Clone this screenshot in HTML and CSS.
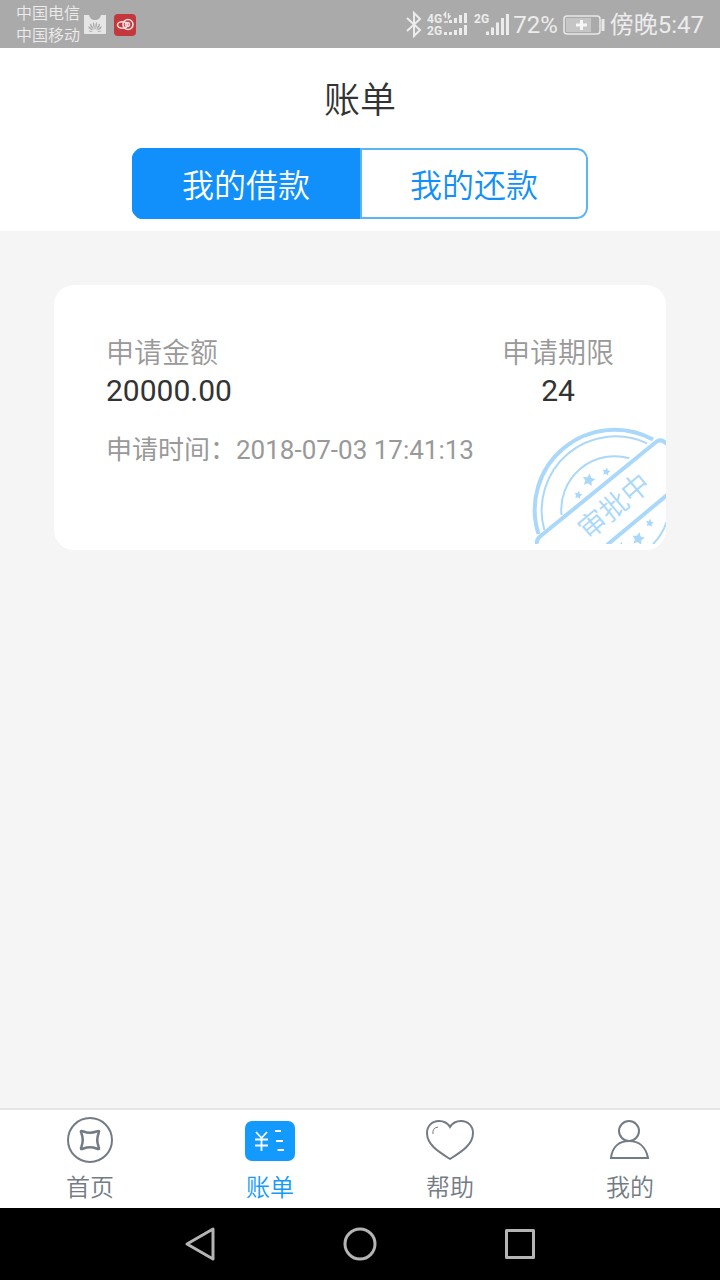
FILE: index.html
```html
<!DOCTYPE html>
<html lang="zh-CN">
<head>
<meta charset="utf-8">
<meta name="viewport" content="width=device-width, initial-scale=1">
<title>账单</title>
<link rel="stylesheet" href="styles.css">
</head>
<body>
<div class="status-bar">
  <div class="status-left">
    <div class="carriers"><span>中国电信</span><span>中国移动</span></div>
    <svg width="22" height="22" viewBox="0 0 22 22" aria-hidden="true">
      <path d="M0 1H5Q6 6 11 6T17 1H22V19Q22 20 21 20H1Q0 20 0 19Z" fill="#e6e6e6"/>
      <g fill="#aaa"><path d="M10.600 16Q8 10 9.500 8Q11 10 10.600 16Z"/><path d="M11.400 16Q11 10 12.500 8Q14 10 11.400 16Z"/><path d="M9.800 16Q5 12 6.200 9.500Q8.500 11 9.800 16Z"/><path d="M12.200 16Q17 12 15.800 9.500Q13.500 11 12.200 16Z"/><path d="M9.200 16.500Q4 15 4.300 12Q7 13 9.200 16.500Z"/><path d="M12.800 16.500Q18 15 17.700 12Q15 13 12.800 16.500Z"/><path d="M9 17.200Q5.500 18.500 4.500 16.500Z"/><path d="M13 17.200Q16.500 18.500 17.500 16.500Z"/></g>
    </svg>
    <svg width="22" height="22" viewBox="0 0 22 22" aria-hidden="true">
      <rect width="22" height="22" rx="4" fill="#c4373d"/>
      <g fill="none" stroke="#f6dede" stroke-width="1.600"><circle cx="14" cy="10.500" r="5"/><ellipse cx="8.500" cy="11" rx="5" ry="3.200"/><circle cx="13.500" cy="10.500" r="2"/></g>
    </svg>
  </div>
  <div class="status-right">
    <svg width="106" height="30" viewBox="0 0 106 30" aria-hidden="true">
      <path d="M2 8L15 20L9 26V3L15 9L2 21" fill="none" stroke="#ececec" stroke-width="2"/>
      <g class="network"><text x="22" y="13">4G</text><text x="22" y="25">2G</text><text x="69" y="13">2G</text></g>
      <g stroke="#ececec" stroke-width="3">
        <path d="M45.500 13V10M50.500 13V8M55.500 13V5M60.500 13V3M45.500 25V22M50.500 25V20M55.500 25V18M60.500 25V15M40.500 25V22"/>
        <path d="M82.500 25V21.500M87.500 25V17.500M92.500 25V12.500M97.500 25V8M102.500 25V4"/>
      </g>
      <path d="M40.500 8V3L38.500 5.500M43.500 3V8L45.500 5.500M39 12H43" fill="none" stroke="#ececec" stroke-width="1.500"/>
    </svg>
    <span>72%</span>
    <svg class="battery" width="42" height="20" viewBox="0 0 42 20" aria-hidden="true">
      <rect x="1" y="1" width="36" height="18" rx="3" fill="none" stroke="#e8e8e8" stroke-width="1.500"/>
      <rect x="3" y="3" width="25" height="14" fill="#c5c5c5"/>
      <path d="M18.500 5V15M13 10H24" stroke="#f6f6f6" stroke-width="3"/><path d="M40 4V16" stroke="#e8e8e8" stroke-width="3"/>
    </svg>
    <span>傍晚5:47</span>
  </div>
</div>

<header class="header">
  <h1 class="title">账单</h1>
  <div class="segments">
    <button class="segment segment-active" type="button" aria-pressed="true">我的借款</button>
    <button class="segment" type="button" aria-pressed="false">我的还款</button>
  </div>
</header>

<main class="content">
  <article class="loan-card">
    <div class="loan-summary">
      <div><div class="label">申请金额</div><div class="value">20000.00</div></div>
      <div class="term"><div class="label">申请期限</div><div class="value">24</div></div>
    </div>
    <p class="applied">申请时间：2018-07-03 17:41:13</p>
    <svg class="stamp" width="136" height="126" viewBox="0 0 136 126" role="img" aria-label="审批中">
      <defs><path id="star" d="M0-6L1.800-2.300L5.800-1.800L2.900 1L3.600 5L0 3.100L-3.600 5L-2.900 1L-5.800-1.800L-1.800-2.300Z"/></defs>
      <svg width="136" height="120">
        <g fill="none" stroke="#a9d8fb">
          <path d="M8.500 110A80 80 0 0 1 123 15.500" stroke-width="4"/>
          <path d="M14.300 106A74 74 0 0 1 117 19.300" stroke-width="2"/>
          <path d="M31.500 91A53.500 53.500 0 0 1 99.300 34.200M136.500 98A53 53 0 0 1 123 120" stroke-width="2"/>
          <path d="M7 120Q6 116 10 112.500L126 18Q131 14 137 20M137 71L77 121" stroke-width="4"/>
        </g>
        <g fill="#a9d8fb">
          <use href="#star" transform="translate(58.700 56) rotate(10) scale(1.100)"/>
          <use href="#star" transform="translate(76.300 47.700) rotate(10) scale(.7)"/>
          <use href="#star" transform="translate(48.300 71) rotate(10) scale(.7)"/>
          <use href="#star" transform="translate(119.700 99) rotate(10) scale(.7)"/>
          <use href="#star" transform="translate(108.300 114.700) rotate(10) scale(1.100)"/>
          <use href="#star" transform="translate(91 122) rotate(10) scale(.7)"/>
        </g>
      </svg>
      <text class="stamp-text" x="84" y="92" transform="rotate(-40 84 82)">审批中</text>
    </svg>
  </article>
</main>

<nav class="tab-bar">
  <a class="tab" href="#home">
    <svg width="50" height="48" viewBox="0 0 50 48" aria-hidden="true"><g fill="none" stroke="#737b84"><circle cx="25" cy="24" r="22" stroke-width="2"/><path d="M16.500 17.500Q14.500 14 18.500 15.500Q25 18 31.500 15.500Q35.500 14 33.500 17.500Q31 24 33.500 30.500Q35.500 34 31.500 32.500Q25 30 18.500 32.500Q14.500 34 16.500 30.500Q19 24 16.500 17.500Z" stroke-width="2.500"/></g></svg>
    <span>首页</span>
  </a>
  <a class="tab tab-active" href="#bill" aria-current="page">
    <svg width="50" height="48" viewBox="0 0 50 48" aria-hidden="true"><rect y="5" width="50" height="40" rx="7" fill="#129aff"/><path d="M11 16L16.500 22L22 16M10 23.500H23M10 29.500H23M16.500 22V35M30 15H36M31 25H38M32.500 34H39" fill="none" stroke="#fff" stroke-width="1.800"/></svg>
    <span>账单</span>
  </a>
  <a class="tab" href="#help">
    <svg width="50" height="48" viewBox="0 0 50 48" aria-hidden="true"><g fill="none" stroke="#737b84"><path d="M25 11C22 6 18 5 14 5C7 5 2 10 2 17C2 29 14 36 25 43C36 36 48 29 48 17C48 10 43 5 36 5C32 5 28 6 25 11Z" stroke-width="2"/><path d="M8 18Q7 12 13 11" stroke-width="1"/></g></svg>
    <span>帮助</span>
  </a>
  <a class="tab" href="#mine">
    <svg width="50" height="48" viewBox="0 0 50 48" aria-hidden="true"><g fill="none" stroke="#737b84" stroke-width="2"><circle cx="24" cy="15" r="10"/><path d="M6 42C7 31 14 25 24 25S41 31 43 42Z"/></g></svg>
    <span>我的</span>
  </a>
</nav>

<div class="system-nav">
  <button type="button" aria-label="返回"><svg width="36" height="36" viewBox="0 0 36 36"><path d="M31 3V33L5 18Z"/></svg></button>
  <button type="button" aria-label="主屏幕"><svg width="36" height="36" viewBox="0 0 36 36"><circle cx="18" cy="18" r="15"/></svg></button>
  <button type="button" aria-label="最近任务"><svg width="36" height="36" viewBox="0 0 36 36"><rect x="4.500" y="4.500" width="27" height="27"/></svg></button>
</div>
</body>
</html>
```
FILE: styles.css
```css
* {
  box-sizing: border-box;
}

body {
  margin: 0;
  min-height: 100vh;
  display: flex;
  flex-direction: column;
  background: #f5f5f5;
  color: #333;
  font-family: Roboto, "Noto Sans CJK SC", sans-serif;
}

button {
  font: inherit;
  cursor: pointer;
}

svg {
  display: block;
  flex: none;
}

.status-bar {
  height: 48px;
  padding: 2px 16px 0;
  display: flex;
  align-items: center;
  justify-content: space-between;
  background: #aaa;
  color: #ececec;
}

.status-left {
  display: flex;
  align-items: center;
  gap: 8px;
}

.carriers {
  display: flex;
  flex-direction: column;
  margin-right: -4px;
  font-size: 16px;
  font-weight: 350;
  line-height: 22px;
}

.status-right {
  display: flex;
  align-items: center;
  gap: 2px;
  font-size: 24px;
  line-height: 48px;
}

.network {
  fill: #ececec;
  font-size: 12px;
  font-weight: 700;
}

.battery {
  margin: 0 3px;
}

.header {
  padding: 27px 0 12px;
  background: #fff;
}

.title {
  margin: 0 0 21px;
  text-align: center;
  font-size: 36px;
  font-weight: 350;
  line-height: 52px;
}

.segments {
  width: 64%;
  max-width: 456px;
  margin: 0 auto;
  display: flex;
  overflow: hidden;
  border-radius: 11px;
}

.segment {
  flex: 1;
  padding: 5px 0 0;
  border: 2px solid #5bb4f5;
  border-radius: 0 11px 11px 0;
  background: #fff;
  color: #118ffa;
  font-size: 32px;
  font-weight: 350;
  line-height: 62px;
}

.segment-active {
  border-color: #118ffa;
  border-radius: 0;
  background: #118ffa;
  color: #fff;
}

.content {
  flex: 1;
  padding: 54px;
}

.loan-card {
  position: relative;
  min-height: 265px;
  padding: 50px 52px;
  overflow: hidden;
  border-radius: 20px;
  background: #fff;
}

.loan-summary {
  display: flex;
  justify-content: space-between;
}

.term {
  text-align: center;
}

.label {
  color: #999;
  font-size: 28px;
  font-weight: 350;
  line-height: 38px;
}

.value {
  font-size: 30px;
  line-height: 36px;
}

.applied {
  margin: 22px 0 0;
  color: #999;
  font-size: 26px;
  line-height: 38px;
}

.stamp {
  position: absolute;
  right: 0;
  bottom: 0;
}

.stamp-text {
  fill: #a9d8fb;
  font-size: 28px;
  font-weight: 350;
  text-anchor: middle;
}

.tab-bar {
  height: 100px;
  padding-top: 6px;
  display: flex;
  border-top: 2px solid #e5e5e5;
  background: #fff;
}

.tab {
  flex: 1;
  display: flex;
  flex-direction: column;
  align-items: center;
  gap: 7px;
  color: #737b84;
  font-size: 24px;
  font-weight: 350;
  line-height: 34px;
  text-decoration: none;
}

.tab-active {
  color: #129aff;
}

.system-nav {
  height: 72px;
  display: flex;
  align-items: center;
  justify-content: center;
  gap: 124px;
  background: #000;
}

.system-nav button {
  padding: 0;
  border: 0;
  background: none;
}

.system-nav svg {
  fill: none;
  stroke: #b4b4b4;
  stroke-width: 3;
  stroke-linejoin: round;
}
```
